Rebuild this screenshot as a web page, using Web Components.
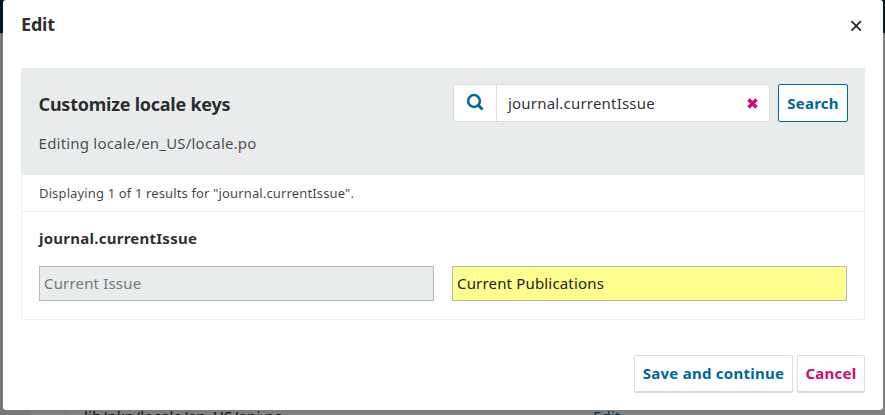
<!DOCTYPE html>
<html lang="en">
<head>
<meta charset="utf-8">
<title>Edit</title>
<style>
html,body{margin:0;height:100%;overflow:hidden}
body{font-family:"Noto Sans","Open Sans",sans-serif;color:rgba(0,0,0,.84);font-size:15px}
</style>
</head>
<body>
<locale-page>
  <file-row slot="rows" path="lib/pkp/locale/en_US/api.po"></file-row>
  <modal-dialog slot="dialog" heading="Edit">
    <locale-panel heading="Customize locale keys" note="Editing locale/en_US/locale.po">
      <search-box slot="search" value="journal.currentIssue"></search-box>
      <ui-button slot="search" variant="active">Search</ui-button>
      <span slot="status">Displaying 1 of 1 results for "journal.currentIssue".</span>
      <locale-entry name="journal.currentIssue" source="Current Issue" value="Current Publications"></locale-entry>
    </locale-panel>
    <ui-button slot="actions" style="--w:159px">Save and continue</ui-button>
    <ui-button slot="actions" variant="warn" style="--w:68px">Cancel</ui-button>
  </modal-dialog>
</locale-page>
<script>
const define = (name, render) => customElements.define(name, class extends HTMLElement {
  connectedCallback() {
    if (this.shadowRoot) return;
    this.attachShadow({mode: 'open'}).innerHTML =
      '<style>*{box-sizing:border-box}:host{box-sizing:border-box}</style>' + render(this);
  }
});
const attr = (el, n) => (el.getAttribute(n) || '').replace(/&/g, '&amp;').replace(/</g, '&lt;').replace(/"/g, '&quot;');

define('locale-page', () => `
<style>
:host{display:flex;flex-direction:column;position:relative;height:100vh;overflow:hidden;background:#777879}
header{height:33px;background:#001722;flex:none}
main{flex:1;display:flex;flex-direction:column;background:linear-gradient(90deg,#777879 30px,#7f7f7f 30px);padding-left:30px}
.line{height:44px;border-bottom:1px solid #777;flex:none}
.line:first-child{height:10px}
</style>
<header></header>
<main>${'<div class="line"></div>'.repeat(9)}<slot name="rows"></slot></main>
<slot name="dialog"></slot>`);

define('file-row', el => `
<style>
:host{display:grid;grid-template-columns:36px 18px 509px 1fr;flex:none;height:44px;margin-top:-1px;line-height:20px;font-size:15px;color:#111}
i{border-right:1px solid #777}
span{padding-top:12px;letter-spacing:.2px}
.edit{color:#00314c}
</style>
<i></i><b></b><span>${attr(el, 'path')}</span><span class="edit">Edit</span>`);

define('modal-dialog', el => `
<style>
:host{position:absolute;left:3px;top:0;width:880px;height:410px;background:#fff;border-radius:3px;display:flex;flex-direction:column;padding:0 18px 17px}
header{display:flex;justify-content:space-between;align-items:center;height:50px;flex:none;padding-right:3px}
h1{margin:-2px 0 0;font-size:18px;line-height:24px;font-weight:700;letter-spacing:-.2px}
header svg{width:12px;height:12px;margin-top:2px}
main{margin-top:18px;flex:1}
footer{display:flex;justify-content:flex-end;gap:4px;height:38px}
</style>
<header><h1>${attr(el, 'heading')}</h1>
<svg viewBox="0 0 12 12"><path d="M1.500 1.200l9.400 9.400M10.900 1.200l-9.400 9.400" stroke="#222" stroke-width="1.700" fill="none"/></svg></header>
<main><slot></slot></main>
<footer><slot name="actions"></slot></footer>`);

define('locale-panel', el => `
<style>
:host{display:block;height:252px;border:1px solid #eee;border-radius:2px}
header{margin:-1px -1px 0;height:107px;background:#e8eced;border-radius:2px 2px 0 0;padding:16px 17px 0;display:flex;justify-content:space-between}
h2{margin:8px 0 0;font-size:18px;line-height:24px;font-weight:700;letter-spacing:-.25px;padding-left:.6px}
p{margin:17px 0 0;font-size:15px;line-height:20px;color:rgba(0,0,0,.7);letter-spacing:.2px;padding-left:.6px}
.tools{display:flex;gap:8px;height:38px}
.status{height:37px;border-bottom:1px solid #eee;padding:0 17px;font-size:13px;line-height:36px;color:rgba(0,0,0,.75);letter-spacing:.14px}
</style>
<header><div><h2>${attr(el, 'heading')}</h2><p>${attr(el, 'note')}</p></div>
<div class="tools"><slot name="search"></slot></div></header>
<div class="status"><slot name="status"></slot></div>
<slot></slot>`);

define('search-box', el => `
<style>
:host{display:flex;align-items:center;width:317px;height:38px;background:#fff;border:1px solid #ddd;border-radius:2px;color:rgba(0,0,0,.84)}
.icon{width:43px;height:100%;border-right:1px solid #ddd;display:flex;align-items:center;justify-content:center}
.icon svg{width:18px;height:18px;margin-top:-2px}
.value{flex:1;padding-left:11px;line-height:20px;letter-spacing:.2px}
.clear{width:11px;height:11px;margin-right:11px}
</style>
<div class="icon"><svg viewBox="0 0 18 18" fill="none" stroke="#006798"><circle cx="8" cy="8" r="5.900" stroke-width="2.500"/><path d="M12.300 12.300l4.200 4.200" stroke-width="3"/></svg></div>
<div class="value">${attr(el, 'value')}</div>
<svg class="clear" viewBox="0 0 11 11"><path d="M1.500 1.500l8 8M9.500 1.500l-8 8" stroke="#d00a6c" stroke-width="3.300"/></svg>`);

define('ui-button', el => `
<style>
:host{display:flex;align-items:center;justify-content:center;width:var(--w,70px);height:38px;background:#fff;border:1px solid #ddd;border-bottom-width:2px;border-radius:2px;padding-bottom:1px;color:#006798;line-height:20px;font-weight:700;white-space:nowrap;letter-spacing:.26px}
:host([variant=active]){border:1px solid #006798;padding-bottom:0}
:host([variant=warn]){color:#d00a6c}
</style><slot></slot>`);

define('locale-entry', el => `
<style>
:host{display:block;padding:16px 17px 17px}
h3{margin:0;font-size:15px;line-height:20px;font-weight:700;letter-spacing:.25px}
.fields{display:grid;grid-template-columns:1fr 1fr;gap:18px;margin-top:18px}
.field{height:35px;border:1px solid #b4b8b9;padding:0 4px;line-height:33px;letter-spacing:.17px}
.source{background:#e8eced;color:#777}
.value{background:#ffff90;color:#222}
</style>
<h3>${attr(el, 'name')}</h3>
<div class="fields"><div class="field source">${attr(el, 'source')}</div><div class="field value">${attr(el, 'value')}</div></div>`);
</script>
</body>
</html>
